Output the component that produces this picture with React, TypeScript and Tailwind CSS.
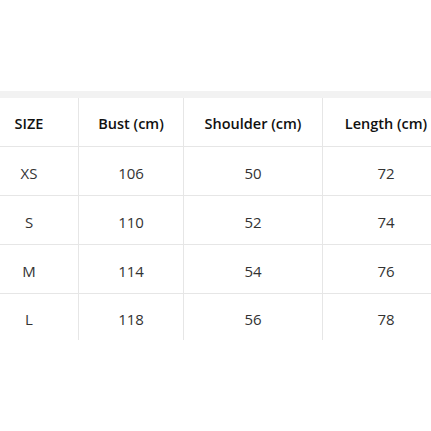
const cols = ['SIZE', 'Bust (cm)', 'Shoulder (cm)', 'Length (cm)'];
const rows = [
  ['XS', '106', '50', '72'],
  ['S', '110', '52', '74'],
  ['M', '114', '54', '76'],
  ['L', '118', '56', '78'],
];
const widths = ['w-[99px]', 'w-[105px]', 'w-[139px]', 'w-[126px]'];

export default function App() {
  return (
    <div className="w-[431px] h-[431px] overflow-hidden bg-white" style={{ fontFamily: '"Open Sans", "Noto Sans", sans-serif' }}>
      <div className="h-[91px]" />
      <div className="h-[7px] bg-[#f2f2f2] w-full" />
      <div className="-ml-[20px] w-max">
        <div className="flex h-[49px] border-b border-[#e6e6e6]">
          {cols.map((c, i) => (
            <div key={c} className={`${widths[i]} shrink-0 flex items-center justify-center pt-[4px] text-[14.5px] font-semibold text-[#111] ${i < 3 ? 'border-r border-[#e6e6e6]' : ''}`}>
              {c}
            </div>
          ))}
        </div>
        {rows.map((r, ri) => (
          <div key={r[0]} className={`flex ${ri < 3 ? 'h-[49px] border-b border-[#e6e6e6]' : 'h-[46px]'}`}>
            {r.map((v, i) => (
              <div key={i} className={`${widths[i]} shrink-0 flex items-center justify-center pt-[4px] text-[15px] text-[#333] ${i < 3 ? 'border-r border-[#e6e6e6]' : ''}`}>
                {v}
              </div>
            ))}
          </div>
        ))}
      </div>
    </div>
  );
}
